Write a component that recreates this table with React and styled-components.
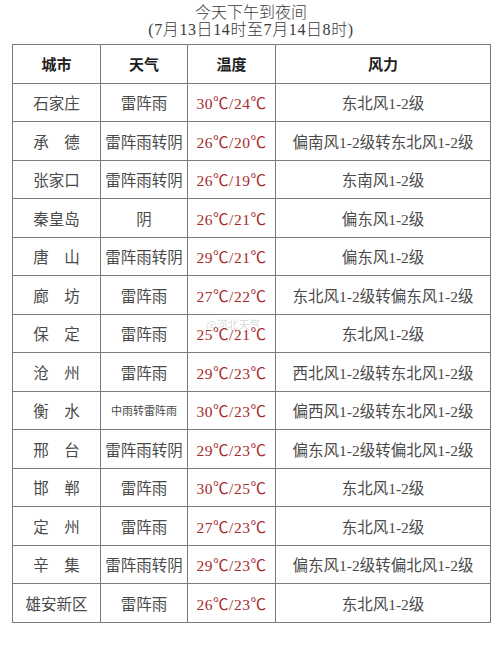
import React from 'react';
import styled, { createGlobalStyle } from 'styled-components';

const GlobalStyle = createGlobalStyle`
  html, body {
    margin: 0;
    padding: 0;
    background: #fff;
  }
  body {
    font-family: "Liberation Serif", "Noto Sans CJK SC", serif;
  }
`;

const Page = styled.div`
  width: 500px;
  height: 646px;
  box-sizing: border-box;
  padding: 4px 10px 0 12px;
  position: relative;
  overflow: hidden;
`;

const Title = styled.div`
  text-align: center;
  color: #3a3a3a;
  font-size: 16px;
  line-height: 17px;
  font-weight: 300;
  letter-spacing: ${(p) => (p.$sub ? '0.6px' : '0')};
`;

const Table = styled.table`
  margin-top: 6px;
  width: 478px;
  border-collapse: collapse;
  table-layout: fixed;
  border: 1px solid #8a8a8a;
`;

const Th = styled.th`
  height: 37.5px;
  padding: 0;
  border: 1px solid #7a7a7a;
  color: #1e1e1e;
  font-size: 15px;
  font-weight: 700;
  text-align: center;
`;

const Td = styled.td`
  height: 37.5px;
  padding: 0;
  border: 1px solid #7a7a7a;
  color: ${(p) => (p.$hot ? '#a52a2a' : '#4a4a4a')};
  font-size: ${(p) => (p.$small ? '11px' : '15.5px')};
  text-align: center;
  white-space: nowrap;
  letter-spacing: ${(p) => (p.$hot ? '0.5px' : '0')};
`;

const Watermark = styled.div`
  position: absolute;
  left: 206px;
  top: 316px;
  color: rgba(120, 120, 120, 0.3);
  font-size: 11px;
  font-family: "Noto Sans CJK SC", sans-serif;
  pointer-events: none;
`;

const rows = [
  ['石家庄', '雷阵雨', '30℃/24℃', '东北风1-2级'],
  ['承　德', '雷阵雨转阴', '26℃/20℃', '偏南风1-2级转东北风1-2级'],
  ['张家口', '雷阵雨转阴', '26℃/19℃', '东南风1-2级'],
  ['秦皇岛', '阴', '26℃/21℃', '偏东风1-2级'],
  ['唐　山', '雷阵雨转阴', '29℃/21℃', '偏东风1-2级'],
  ['廊　坊', '雷阵雨', '27℃/22℃', '东北风1-2级转偏东风1-2级'],
  ['保　定', '雷阵雨', '25℃/21℃', '东北风1-2级'],
  ['沧　州', '雷阵雨', '29℃/23℃', '西北风1-2级转东北风1-2级'],
  ['衡　水', '中雨转雷阵雨', '30℃/23℃', '偏西风1-2级转东北风1-2级'],
  ['邢　台', '雷阵雨转阴', '29℃/23℃', '偏东风1-2级转偏北风1-2级'],
  ['邯　郸', '雷阵雨', '30℃/25℃', '东北风1-2级'],
  ['定　州', '雷阵雨', '27℃/23℃', '东北风1-2级'],
  ['辛　集', '雷阵雨转阴', '29℃/23℃', '偏东风1-2级转偏北风1-2级'],
  ['雄安新区', '雷阵雨', '26℃/23℃', '东北风1-2级'],
];

export default function App() {
  return (
    <>
      <GlobalStyle />
      <Page>
        <Title>今天下午到夜间</Title>
        <Title $sub>(7月13日14时至7月14日8时)</Title>
        <Table>
          <colgroup>
            <col style={{ width: 88 }} />
            <col style={{ width: 87 }} />
            <col style={{ width: 88 }} />
            <col style={{ width: 215 }} />
          </colgroup>
          <thead>
            <tr>
              <Th>城市</Th>
              <Th>天气</Th>
              <Th>温度</Th>
              <Th>风力</Th>
            </tr>
          </thead>
          <tbody>
            {rows.map(([city, weather, temp, wind]) => (
              <tr key={city}>
                <Td>{city}</Td>
                <Td $small={weather.length > 5}>{weather}</Td>
                <Td $hot>{temp}</Td>
                <Td>{wind}</Td>
              </tr>
            ))}
          </tbody>
        </Table>
        <Watermark>@河北天气</Watermark>
      </Page>
    </>
  );
}
